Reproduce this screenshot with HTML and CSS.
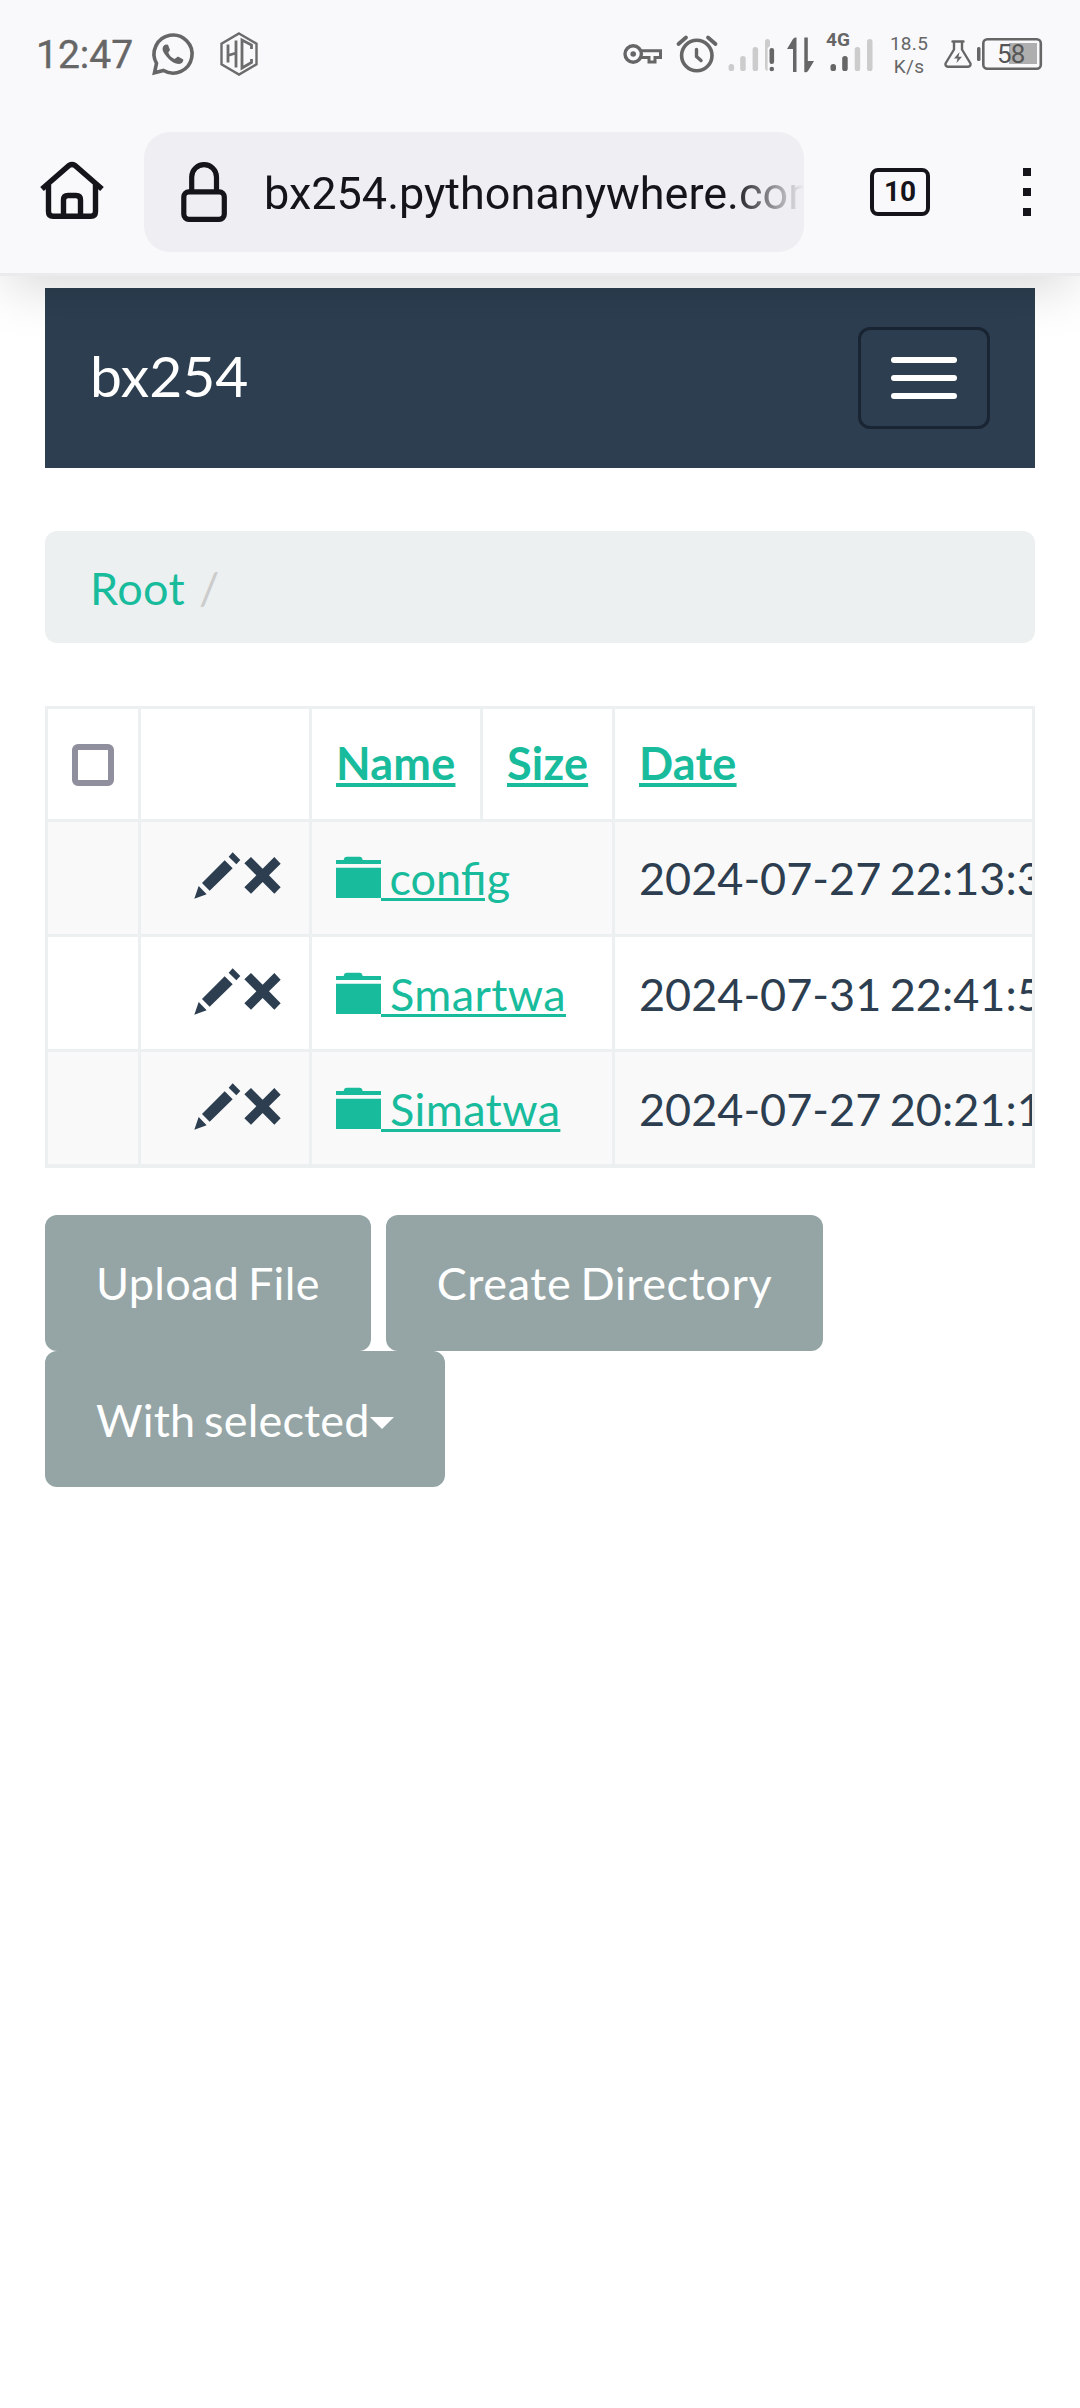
FILE: index.html
```html
<!DOCTYPE html>
<html lang="en">
<head>
<meta charset="utf-8">
<title>bx254</title>
<link rel="stylesheet" href="styles.css">
</head>
<body>
<svg class="sprite" width="0" height="0" aria-hidden="true">
  <symbol id="actions" viewBox="570 480 285 150">
    <path d="M583 626L596 588L620 613ZM606 579L674 511L698 535L629 602ZM686 500L698 487L721 510L709 523Z"/>
    <path d="M753 501L788 536L823 501L842 521L807 556L842 592L823 611L788 576L753 611L733 592L769 556L733 520Z"/>
  </symbol>
  <symbol id="folder" viewBox="0 0 135 126">
    <path d="M0 12H23Q24 2 33 2H70Q79 2 80 12H135V24H0ZM0 35H135V126H0Z"/>
  </symbol>
</svg>

<header class="chrome">
  <div class="status">
    <span class="clock">12:47</span>
    <svg width="64" height="110" viewBox="146 0 64 110">
      <path d="M156.500 63.400A19 19 0 1 1 163.500 70.500L154.500 72.800Z" fill="none" stroke="#666" stroke-width="3.600"/>
      <path d="M165.500 44.500C162 46 161.500 50 165 54.500C169 60 174 64 179 64C182 63.800 183.500 61.500 183.300 59.500L178 56.500L174.500 59Q170 57 168.300 52.500L170 50L168 44.700Z" fill="#666"/>
    </svg>
    <svg width="60" height="110" viewBox="210 0 60 110" fill="none" stroke="#6c6c6c">
      <path d="M239 33.500L256.500 43.600V64.400L239 74.500L221.500 64.400V43.600Z" stroke-width="2.400"/>
      <path d="M228 44.500V62.500M236 40.500V67.500M228 55.500L236 53M251.500 49V45L242 40V68L251.500 62.500V59" stroke-width="2.800"/>
    </svg>
    <span class="spacer"></span>
    <svg width="55" height="110" viewBox="615 0 55 110" fill="none" stroke="#666">
      <circle cx="633.200" cy="54" r="8.200" stroke-width="3.400"/>
      <circle cx="633.200" cy="54" r="2.800" fill="#666" stroke="none"/>
      <path d="M641 50.700H660.500V57.500H655V62H649V57.500H641" stroke-width="3"/>
    </svg>
    <svg width="50" height="110" viewBox="670 0 50 110" fill="none" stroke="#666" stroke-linecap="round" stroke-linejoin="round">
      <circle cx="696.800" cy="55.500" r="15.200" stroke-width="3.600"/>
      <path d="M696.500 49.500V56.500L701 60.500" stroke-width="3.400"/>
      <path d="M678.500 44L686 37.500M715.500 44L708 37.500" stroke-width="3.800"/>
    </svg>
    <svg width="62" height="110" viewBox="720 0 62 110">
      <g fill="#ccc">
        <rect x="728.600" y="64" width="5.500" height="7" rx="2.600"/>
        <rect x="740.200" y="56" width="5.500" height="15" rx="2.600"/>
        <rect x="752.600" y="47" width="5.500" height="24" rx="2.600"/>
        <path d="M765 41.500Q765 39 767.500 39Q770 39 770 41.500V46L767.600 48V71Q765 70.500 765 68Z"/>
      </g>
      <rect x="769.500" y="48" width="4.600" height="16" rx="2.200" fill="#666"/>
      <circle cx="771.800" cy="69" r="2.300" fill="#666"/>
    </svg>
    <svg width="38" height="110" viewBox="782 0 38 110" fill="#666">
      <path d="M787 49L793 39Q794 37 796.500 37.500V72H793V49ZM804.300 37.500H807.800V61H814L808 71Q806.500 73 804.300 72Z"/>
    </svg>
    <div class="cell-signal">
      <span class="generation">4G</span>
      <svg width="60" height="110" viewBox="820 0 60 110">
        <rect x="830.500" y="64" width="5.500" height="7" rx="2.600" fill="#666"/>
        <rect x="842.200" y="56" width="5.500" height="15" rx="2.600" fill="#666"/>
        <rect x="854.700" y="47" width="5.500" height="24" rx="2.600" fill="#ccc"/>
        <rect x="867" y="39" width="5.500" height="32" rx="2.600" fill="#ccc"/>
      </svg>
    </div>
    <span class="speed">18.5<br>K/s</span>
    <svg width="38" height="110" viewBox="938 0 38 110" fill="none" stroke="#666" stroke-width="2.400" stroke-linejoin="round" stroke-linecap="round">
      <path d="M952.500 41.500H963.500M954 42V49.500L945.500 63.500Q945 66.500 948 66.800H968Q971 66.500 970.500 63.500L962 49.500V42"/>
      <path d="M959.500 52L954 58.500H957.500L956.500 63L962 56.700H958.500Z" fill="#666" stroke="none"/>
    </svg>
    <svg width="104" height="110" viewBox="976 0 104 110">
      <rect x="977" y="47" width="3.500" height="14" rx="1.500" fill="#666"/>
      <rect x="983.300" y="39.300" width="57.500" height="29.500" rx="4" fill="none" stroke="#666" stroke-width="2.600"/>
      <rect x="1009" y="43" width="28" height="21" fill="#aeaeae"/>
      <text x="997" y="63" class="battery">58</text>
    </svg>
  </div>

  <div class="toolbar">
    <svg width="144" height="120" viewBox="0 132 144 120" fill="none" stroke="#15141a" stroke-width="5.400">
      <path d="M42 189L69 165.500Q72 163.500 75 165.500L102 189M48.500 184V211.500Q48.500 216.300 53 216.300H91Q95.500 216.300 95.500 211.500V184M63.500 216V200Q63.500 195.500 68 195.500H76Q80.500 195.500 80.500 200V216"/>
    </svg>
    <div class="address">
      <svg width="60" height="120" viewBox="172 132 60 120" fill="none" stroke="#15141a" stroke-width="5.200">
        <rect x="183.800" y="191.800" width="40.500" height="27.500" rx="5"/>
        <path d="M191.700 191V177A12.400 12.400 0 0 1 216.500 177V191"/>
      </svg>
      <span class="url">bx254.pythonanywhere.com</span>
    </div>
    <span class="tabs">10</span>
    <span class="menu"><i></i><i></i><i></i></span>
  </div>
</header>

<main class="page">
  <nav class="navbar">
    <span class="brand">bx254</span>
    <span class="toggle"><i></i><i></i><i></i></span>
  </nav>

  <div class="breadcrumb"><a class="crumb">Root</a><span class="slash">/</span></div>

  <div class="table-wrap">
    <table class="files">
      <colgroup><col class="c-check"><col class="c-act"><col class="c-name"><col class="c-size"><col class="c-date"></colgroup>
      <thead>
        <tr><th><span class="check"></span></th><th></th><th><a>Name</a></th><th><a>Size</a></th><th><a>Date</a></th></tr>
      </thead>
      <tbody>
        <tr><td></td><td><svg class="actions"><use href="#actions"/></svg></td><td colspan="2"><a><svg class="folder"><use href="#folder"/></svg> config</a></td><td>2024-07-27 22:13:38</td></tr>
        <tr><td></td><td><svg class="actions"><use href="#actions"/></svg></td><td colspan="2"><a class="loose"><svg class="folder"><use href="#folder"/></svg> Smartwa</a></td><td>2024-07-31 22:41:50</td></tr>
        <tr><td></td><td><svg class="actions"><use href="#actions"/></svg></td><td colspan="2"><a class="loose"><svg class="folder"><use href="#folder"/></svg> Simatwa</a></td><td>2024-07-27 20:21:10</td></tr>
      </tbody>
    </table>
  </div>

  <div class="buttons">
    <span class="btn upload">Upload File</span>
    <span class="btn create">Create Directory</span>
    <span class="btn selected">With selected<i class="caret"></i></span>
  </div>
</main>
</body>
</html>
```
FILE: styles.css
```css
* { box-sizing: border-box; }

body {
  margin: 0;
  height: 2408px;
  overflow: hidden;
  background: #fff;
  color: #2c3e50;
  font: 45px/64.28px Lato, sans-serif;
}

svg { display: block; flex: none; }
.sprite { position: absolute; }

/* Browser chrome */
.chrome {
  position: relative;
  z-index: 1;
  height: 276px;
  background: #f9f9fb;
  border-bottom: 3px solid #ebebed;
  box-shadow: 0 18px 50px -6px rgba(0, 0, 0, .15);
  font-family: Roboto, sans-serif;
}

.status {
  display: flex;
  height: 110px;
  padding-left: 36px;
  color: #666;
}

.clock {
  width: 110px;
  font-size: 39px;
  font-weight: 400;
  line-height: 111px;
  -webkit-text-stroke: .4px #666;
}

.spacer { flex: 1; }
.cell-signal { position: relative; }

.generation {
  position: absolute;
  left: 6px;
  top: 28px;
  font-size: 19px;
  font-weight: 700;
  line-height: 24px;
}

.speed {
  width: 58px;
  padding-top: 32px;
  font-size: 19px;
  line-height: 23px;
  text-align: center;
  letter-spacing: .3px;
}

.battery { font-size: 26px; letter-spacing: -.8px; fill: #555; }

.toolbar {
  display: flex;
  align-items: center;
  height: 120px;
  margin-top: 22px;
  color: #15141a;
}

.address {
  display: flex;
  width: 660px;
  height: 120px;
  padding-left: 28px;
  border-radius: 26px;
  background: #efeff3;
  overflow: hidden;
}

.url {
  width: 540px;
  margin-left: 32px;
  overflow: hidden;
  white-space: nowrap;
  line-height: 123px;
  -webkit-mask-image: linear-gradient(90deg, #000 468px, transparent 540px);
  mask-image: linear-gradient(90deg, #000 468px, transparent 540px);
}

.tabs {
  width: 60px;
  height: 48px;
  margin-left: 66px;
  border: 4.5px solid #15141a;
  border-radius: 8px;
  font-size: 28px;
  font-weight: 700;
  line-height: 39px;
  text-align: center;
}

.menu {
  display: grid;
  gap: 12px;
  margin-left: 93px;
}

.menu i { width: 8px; height: 8px; background: #15141a; }

/* File manager */
.page { padding: 12px 45px 0; }

.navbar {
  display: flex;
  align-items: center;
  justify-content: space-between;
  height: 180px;
  padding: 0 45px;
  background: #2c3e50;
  color: #fff;
}

.brand { padding-bottom: 5px; font-size: 57px; }

.toggle {
  display: grid;
  gap: 12px;
  padding: 27px 30px;
  border: 3px solid #1a2533;
  border-radius: 12px;
}

.toggle i { width: 66px; height: 6px; border-radius: 3px; background: #fff; }

.breadcrumb {
  display: flex;
  height: 112px;
  margin: 63px 0;
  padding: 25px 45px 0;
  border-radius: 12px;
  background: #ecf0f1;
}

.crumb { color: #18bc9c; letter-spacing: .4px; }
.slash { margin-left: 14px; color: #ccc; }

.table-wrap {
  height: 462px;
  border: 3px solid #ecf0f1;
  overflow: hidden;
}

.files {
  width: 1087px;
  table-layout: fixed;
  border-collapse: separate;
  border-spacing: 0;
  word-spacing: -3px;
}

.c-check { width: 93px; }
.c-act, .c-name { width: 171px; }
.c-size { width: 132px; }
.c-date { width: 520px; }

.files th, .files td {
  height: 115px;
  padding: 24px 0 0 24px;
  border: 0 solid #ecf0f1;
  border-width: 0 3px 3px 0;
  text-align: left;
  vertical-align: top;
  white-space: nowrap;
}

.files th { height: 113px; line-height: 60px; }
.files tbody tr:nth-child(n+2) td { padding-top: 25px; }
.files tr:nth-child(odd) td { background: #f9f9f9; }

.files a {
  color: #18bc9c;
  text-decoration: underline;
  text-decoration-thickness: 3px;
  text-underline-offset: 3px;
}

.files a.loose { letter-spacing: .4px; }
.files th a { text-decoration-thickness: 4px; letter-spacing: .2px; }

.check {
  display: block;
  width: 42px;
  height: 42px;
  margin-top: 11px;
  border: 6px solid #8f8f9d;
  border-radius: 6px;
}

.actions {
  width: 95px;
  height: 50px;
  margin: 4px 0 0 25px;
  fill: #2c3e50;
}

.folder {
  display: inline-block;
  width: 45px;
  height: 42px;
  vertical-align: -3px;
  fill: #18bc9c;
}

.buttons {
  display: flex;
  flex-wrap: wrap;
  column-gap: 15px;
  margin-top: 47px;
}

.btn {
  display: flex;
  align-items: center;
  height: 136px;
  padding: 0 51px;
  border-radius: 12px;
  background: #95a5a6;
  color: #fff;
  word-spacing: -3px;
  letter-spacing: .3px;
}

.create { letter-spacing: .6px; }
.selected { letter-spacing: .2px; padding-top: 2px; }

.caret {
  margin-top: 6px;
  border: 12px solid transparent;
  border-top-color: #fff;
  border-bottom: 0;
}
```
